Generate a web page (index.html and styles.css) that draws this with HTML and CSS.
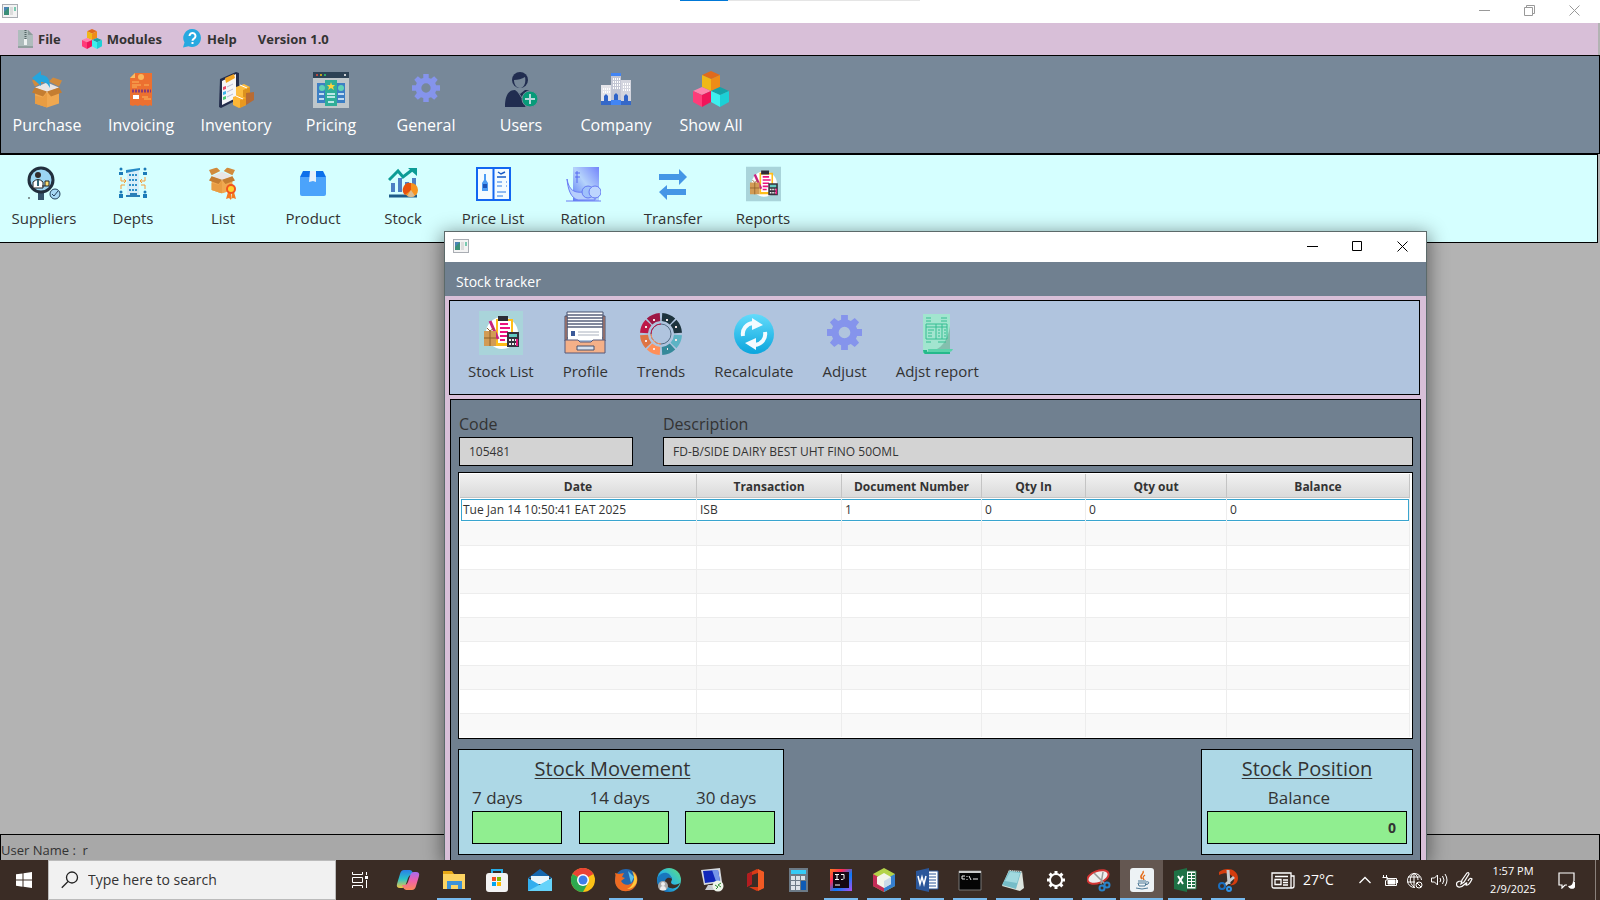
FILE: index.html
```html
<!DOCTYPE html>
<html lang="en">
<head>
<meta charset="utf-8">
<title>Stock tracker</title>
<link rel="stylesheet" href="styles.css">
</head>
<body>
<svg class="defs" aria-hidden="true">
  <defs>
    <linearGradient id="g-sky" x1="0" y1="0" x2="0" y2="1"><stop offset="0" stop-color="#63dbfb"/><stop offset="1" stop-color="#0aa5dd"/></linearGradient>
    <linearGradient id="g-violet" x1="1" y1="0" x2="0" y2="1"><stop offset="0" stop-color="#7384fb"/><stop offset=".5" stop-color="#b5d3fb"/><stop offset="1" stop-color="#5b7cf5"/></linearGradient>
    <linearGradient id="g-cop1" x1="0" y1="0" x2="0" y2="1"><stop offset="0" stop-color="#2a7fe8"/><stop offset=".5" stop-color="#29c3c9"/><stop offset="1" stop-color="#f5c542"/></linearGradient>
    <linearGradient id="g-cop2" x1="0" y1="0" x2="0" y2="1"><stop offset="0" stop-color="#a66bf0"/><stop offset=".5" stop-color="#f062a8"/><stop offset="1" stop-color="#fb8a5a"/></linearGradient>
    <linearGradient id="g-edge" x1="0" y1="1" x2="1" y2="0"><stop offset="0" stop-color="#0c59a4"/><stop offset=".5" stop-color="#2bb7e3"/><stop offset="1" stop-color="#5fe07a"/></linearGradient>
    <linearGradient id="g-ij" x1="0" y1="0" x2="1" y2="1"><stop offset="0" stop-color="#fc801d"/><stop offset=".3" stop-color="#fe2857"/><stop offset=".6" stop-color="#087cfa"/><stop offset="1" stop-color="#b14ff0"/></linearGradient>
  </defs>
  <symbol id="appwin" viewBox="0 0 16 14"><rect x=".5" y=".5" width="15" height="13" fill="#f3f3f3" stroke="#a9adb3"/><path d="M2 3h5v8H2z" fill="#3b8f78"/><path d="M2 3h5L2 8z" fill="#4a83b5"/><path d="M8 3h3v8H8z" fill="#dcdcdc"/><path d="M12 3h2v4h-2z" fill="#79c9b0"/></symbol>
  <symbol id="cubes" viewBox="0 0 36 36"><path d="M18 0l9 4-9 4-9-4z" fill="#e06a1c"/><path d="M9 4l9 4v12l-9-4z" fill="#f0b817"/><path d="M27 4l-9 4v12l9-4z" fill="#ee8c18"/><path d="M9 16l9 4-9 4-9-4z" fill="#ff84ad"/><path d="M0 20l9 4v12l-9-5z" fill="#ff3b79"/><path d="M18 20l-9 4v12l9-5z" fill="#f0145a"/><path d="M27 16l9 4-9 4-9-4z" fill="#14a3a8"/><path d="M18 20l9 4v12l-9-5z" fill="#3df0ee"/><path d="M36 20l-9 4v12l9-5z" fill="#1cd0d6"/></symbol>
  <symbol id="gear" viewBox="0 0 36 36"><path fill="#8594ec" fill-rule="evenodd" d="M14.500 0h7v5l3 1.200 4-3.200 4.500 4.500-3.200 4 1.200 3h5v7h-5l-1.200 3 3.200 4-4.500 4.500-4-3.200-3 1.200v5h-7v-5l-3-1.200-4 3.200L3 28.500l3.200-4-1.200-3H0v-7h5l1.200-3L3 7.500 7.500 3l4 3.200 3-1.200zM18 12a6 6 0 1 0 0 12 6 6 0 0 0 0-12z"/></symbol>
  <symbol id="report" viewBox="0 0 44 44"><path d="M0 0h44v44H0z" fill="#a9d4da"/><circle cx="23" cy="22" r="16" fill="#fff"/><path d="M17 8h17v27H17z" fill="#ffbe1b"/><path d="M19 10h13v22H19z" fill="#fff"/><path d="M19 5h10v5H19z" fill="#2c2c35"/><path d="M21 13h8M21 17h10M21 21h8M21 25h7M21 29h5" stroke="#ec1380" stroke-width="2"/><path d="M11 10l8 18" stroke="#c9237e" stroke-width="3"/><path d="M5 20h12v15H5z" fill="#d29b55"/><path d="M5 27h12M11 20v15" stroke="#8d5f2b"/><path d="M8 17l3 3 4-3" stroke="#8d5f2b" fill="none"/><path d="M28 21h12v15H28z" fill="#35323d"/><path d="M30 23h8v3h-8z" fill="#63c8c0"/><path d="M30 29h8M30 33h8" stroke="#eee" stroke-width="2" stroke-dasharray="2 1"/><path d="M37 28h2v7h-2z" fill="#e3167b"/></symbol>
  <symbol id="box" viewBox="0 0 30 30"><path d="M3 10l12 4 12-4v16l-12 4-12-4z" fill="#f0a850"/><path d="M3 10l12-5 12 5-12 5z" fill="#e9e5e4"/><path d="M3 9L0 3l9-3 4 4zM27 9l3-6-9-3-4 4z" fill="#d18b3c"/><path d="M3 10l12 4-4 5-11-4zM27 10l-12 4 4 5 11-4z" fill="#c47d31"/><path d="M3 18v8l12 4V15l-4 5z" fill="#e99d43"/></symbol>
</svg>

<header class="titlebar">
  <svg width="16" height="14" role="img" aria-label="Application"><use href="#appwin"/></svg>
  <div class="progress"></div>
  <div class="controls faded">
    <button aria-label="Minimize"><svg width="11" height="11"><path d="M0 5.500h11"/></svg></button>
    <button aria-label="Restore"><svg width="11" height="11"><path d="M.5 2.500h8v8h-8zM2.500 2.500v-2h8v8h-2"/></svg></button>
    <button aria-label="Close"><svg width="11" height="11"><path d="M.5.5l10 10M10.500.5l-10 10"/></svg></button>
  </div>
</header>

<nav class="menubar">
  <button><svg width="15" height="18" viewBox="0 0 15 18"><path d="M0 0h10l5 5v13H0z" fill="#aebcbc"/><path d="M10 0l5 5h-5z" fill="#8d9c9c"/><path d="M0 16h15v2H0z" fill="#909e9e"/><path d="M7.500 0v11" stroke="#566" stroke-width="2" stroke-dasharray="1 1"/><path d="M6 9h3v6H6z" fill="#eef2f2"/></svg>File</button>
  <button><svg width="20" height="20"><use href="#cubes"/></svg>Modules</button>
  <button><svg width="19" height="19" viewBox="0 0 19 19"><path d="M9.500 0a9 9 0 1 1-4 17.300L0 18.500l1.500-5A9 9 0 0 1 9.500 0z" fill="#26a9e0"/><path d="M6.500 7a3 3 0 1 1 4.500 2.600c-1 .6-1.500 1-1.500 2.200M9.500 13v2" fill="none" stroke="#fff" stroke-width="2"/></svg>Help</button>
  <button>Version 1.0</button>
</nav>

<nav class="modules">
  <button><svg width="32" height="38" viewBox="0 0 32 38"><svg x="1" y="6" width="30" height="31" preserveAspectRatio="none"><use href="#box"/></svg><path d="M1 7l9-7v4c7 0 9 5 9 13-2-4-4-6-9-6v4z" fill="#25a5dd"/></svg>Purchase</button>
  <button><svg width="32" height="38" viewBox="0 0 32 38"><path d="M5 7l5-5h17v33l-2-1-2 1-3-1-2 1-3-1-2 1-3-1-2 1-3-1z" fill="#ec7030"/><path d="M5 7l5-5v5z" fill="#f9bf66"/><circle cx="16" cy="6" r="3" fill="#fbb75c"/><path d="M7 11h7M7 14h9M7 16h5M19 14h5M19 28h7M17 26h6" stroke="#fbb75c"/><path d="M7 20h19" stroke="#863a78" stroke-width="3" stroke-dasharray="2 1"/><path d="M8 24h6v4H8z" fill="#fff"/></svg>Invoicing</button>
  <button><svg width="36" height="38" viewBox="0 0 36 38"><path d="M2 8L18 1l3 1v26L3 37l-2-1z" fill="#232c4b"/><path d="M4 10l14-7v24L4 34z" fill="#f5f5f8"/><path d="M7 7l9-4 1 4-9 5z" fill="#f5a623"/><path d="M5 16l3-1v3l-3 1z" fill="#e64c6c"/><path d="M5 21l3-1v3l-3 1z" fill="#3fb3ea"/><path d="M5 26l3-1v3l-3 1z" fill="#4ecb71"/><path d="M9 16l6-3M9 21l6-3M9 26l6-3" stroke="#b9bbd0"/><path d="M18 16l8-3 6 3v9l-7 4-7-4z" fill="#fdbd3f"/><path d="M25 19l7-3v9l-7 4z" fill="#dd921e"/><path d="M28 22l8-1v8l-8 5z" fill="#b86b33"/><path d="M15 26l6-2 7 3v7l-7 3-6-3z" fill="#fdb636"/><path d="M22 29l6-2v7l-6 3z" fill="#e9981e"/><path d="M22 14l7 3M18 25l7 3" stroke="#fff"/></svg>Inventory</button>
  <button><svg width="36" height="38" viewBox="0 0 36 38"><path d="M0 1h36v36H0z" fill="#bfc7cb"/><path d="M0 1h36v6H0z" fill="#2d4255"/><circle cx="4" cy="4" r="1" fill="#e74c3c"/><circle cx="8" cy="4" r="1" fill="#f1c40f"/><circle cx="12" cy="4" r="1" fill="#2ecc71"/><circle cx="32" cy="4" r="1" fill="#fff"/><path d="M4 12h28v20H4z" fill="#3c7fc4"/><path d="M12 9h12v26H12z" fill="#2fae98"/><circle cx="9" cy="17" r="3" fill="#5fd3b6"/><circle cx="28" cy="17" r="3" fill="#5fd3b6"/><path d="M18 11l1 3h3l-2 2 1 3-3-2-3 2 1-3-2-2h3z" fill="#ffd33d"/><path d="M6 23h5M6 28h5M14 23h8M14 26h8M25 23h6M25 28h6M15 31h6" stroke="#eafaff" stroke-width="1.500"/></svg>Pricing</button>
  <button><svg width="28" height="38" viewBox="0 0 28 38"><use href="#gear" y="3" width="28" height="28"/></svg>General</button>
  <button><svg width="34" height="38" viewBox="0 0 34 38"><circle cx="16" cy="9" r="8" fill="#212d50"/><path d="M10 9c4 0 8-1 11-3 1 4 0 11-5 11-4 0-6-4-6-8z" fill="#778899"/><path d="M1 36c0-11 3-17 10-17l5 4 5-4c4 0 7 2 8 5l-8 12z" fill="#212d50"/><path d="M14 21l4 6" stroke="#778899"/><circle cx="26" cy="28" r="8" fill="#079b79" stroke="#778899"/><path d="M26 23v10M21 28h10" stroke="#b8d7db" stroke-width="2"/></svg>Users</button>
  <button><svg width="30" height="38" viewBox="0 0 30 38"><path d="M0 14h10v20H0z" fill="#e5e5ea"/><path d="M20 9h10v25H20z" fill="#d3d5de"/><path d="M10 3h10v31H10z" fill="#c3c6d4"/><path d="M10 2h10v3H10z" fill="#4285f4"/><path d="M2 18h7M2 21h7M12 8h7M12 11h7M12 14h7M12 17h7M22 13h7M22 16h7M22 19h7" stroke="#fff" stroke-width="2" stroke-dasharray="1 1"/><path d="M0 30h30v4H0z" fill="#3568c8"/><path d="M3 30v-5l2-2 2 2v5zM23 30v-5l2-2 2 2v5zM13 30v-6l2-2 2 2v6z" fill="#2f64c9"/><path d="M10 29h10v5H10z" fill="#4285f4"/></svg>Company</button>
  <button><svg width="36" height="38" viewBox="0 0 36 38"><use href="#cubes" width="36" height="36"/></svg>Show All</button>
</nav>

<nav class="submodules">
  <button><svg width="34" height="36" viewBox="0 0 34 36"><path d="M11 26h6v8h-6z" fill="#35526a"/><circle cx="14" cy="14" r="12" fill="#9bd5f3" stroke="#222f3d" stroke-width="3"/><circle cx="11" cy="9" r="3" fill="#332b2b"/><path d="M6 21v-5q5-5 10 0v6H6z" fill="#fff" stroke="#222"/><path d="M11 14v6" stroke="#367" stroke-width="2"/><path d="M15 20h7v-5h-4v5" fill="#fddf73" stroke="#222"/><circle cx="28" cy="28" r="5" fill="#a7d9f5" stroke="#24415b"/><path d="M25 28l2 2 4-5" fill="none" stroke="#24415b"/><path d="M2 31l1 1-1 1-1-1z" fill="#333"/></svg>Suppliers</button>
  <button><svg width="30" height="36" viewBox="0 0 30 36"><path d="M9 6l12-3v27H9z" fill="#d6edf8"/><path d="M8 4l14-2v2L8 7z" fill="#258ac6"/><path d="M11 9h9M11 14h9M11 19h9M11 24h9" stroke="#2f8fc9" stroke-width="2" stroke-dasharray="2 1"/><path d="M8 30h14M12 28h7" stroke="#2c7fb8" stroke-width="2"/><path d="M1 9h4v-3H1zM25 9h4v-3h-4zM1 32h4v-4H1zM25 32h4v-4h-4z" fill="#1b7bb8"/><circle cx="3" cy="3" r="1.500" fill="#1b7bb8"/><circle cx="27" cy="3" r="1.500" fill="#1b7bb8"/><circle cx="3" cy="26" r="1.500" fill="#1b7bb8"/><circle cx="27" cy="26" r="1.500" fill="#1b7bb8"/><path d="M3 11v4h4M27 11v4h-4M3 23v-4h4M27 23v-4h-4M6 13l2 2-2 2M24 13l-2 2 2 2" fill="none" stroke="#f39b37"/></svg>Depts</button>
  <button><svg width="30" height="36" viewBox="0 0 30 36"><svg x="1" y="1" width="26" height="27" viewBox="0 0 30 30"><use href="#box" width="30" height="30"/></svg><path d="M20 26l-2 7 3-1 2 2 1-7zM26 26l2 7-3-1-2 1v-6z" fill="#f47b20"/><circle cx="23" cy="23" r="5" fill="#f0541e"/><circle cx="23" cy="23" r="3" fill="#ffd22e"/></svg>List</button>
  <button><svg width="26" height="36" viewBox="0 0 26 36"><path d="M3 5h20l3 6H0z" fill="#0b6fea"/><path d="M0 11h26v17q0 2-2 2H2q-2 0-2-2z" fill="#4ba3fb"/><path d="M10 5h6v11l-3-1-4 1z" fill="#e6f0fa"/></svg>Product</button>
  <button><svg width="30" height="36" viewBox="0 0 30 36"><path d="M1 14l9-9 5 6 9-7" fill="none" stroke="#0c9c96" stroke-width="3"/><path d="M20 2h9v8z" fill="#0c9c96"/><path d="M3 17h4v9H3zM10 12h4v14h-4zM17 16h4v10h-4zM24 12h4v14h-4z" fill="#4e7fc4"/><path d="M1 30h28" stroke="#1d5b88" stroke-width="3"/><circle cx="23" cy="24" r="7" fill="#f7941e"/><path d="M23 24l-6 5a7 7 0 0 1 6-12z" fill="#e8530e"/><path d="M23 24l4 6q-4 2-8 0z" fill="#d9bc92"/></svg>Stock</button>
  <button><svg width="35" height="36" viewBox="0 0 35 36"><path d="M1 2h33v32H1zM17.500 2v32" fill="#f3fbff" stroke="#1266f1" stroke-width="2"/><path d="M8 8h2v6l2 3v8H6v-8l2-3z" fill="#4b9bf4"/><path d="M7 18h4v4H7z" fill="#1d55b8"/><path d="M22 6l3 2 4-2M21 11h9" stroke="#1759c5" stroke-width="1.500" fill="none"/><path d="M21 16h5M30 16h1M21 20h5M30 20h1M21 26h9M21 30h6" stroke="#2b78e4"/></svg>Price List</button>
  <button><svg width="35" height="36" viewBox="0 0 35 36"><path d="M7 1h26v34H7z" fill="url(#g-violet)"/><path d="M11 5v12M9 7h5M9 11h5" stroke="#556bf1"/><path d="M1 13c2 12 8 14 16 13l12-2v10H12C5 32 2 24 1 13z" fill="#b6cffc" stroke="#6a7df5"/><circle cx="22" cy="26" r="6" fill="#9fc1fb" stroke="#6579f2"/><circle cx="29" cy="26" r="6" fill="#bdd5fe" stroke="#6579f2"/><path d="M0 35h35" stroke="#6a7df5"/></svg>Ration</button>
  <button><svg width="30" height="36" viewBox="0 0 30 36"><path d="M1 8h20V3l8 8-8 8v-5H1zM28 23H9v-4l-8 7 8 8v-5h19z" fill="#4596e6"/></svg>Transfer</button>
  <button><svg width="35" height="36" viewBox="0 0 44 44"><use href="#report" width="44" height="44"/></svg>Reports</button>
</nav>

<main class="desktop"></main>
<footer class="status">User Name :&nbsp; r</footer>

<section class="tracker" aria-label="Stock tracker">
  <div class="tracker-title">
    <svg width="16" height="14" aria-hidden="true"><use href="#appwin"/></svg>
    <div class="controls">
      <button aria-label="Minimize"><svg width="11" height="11"><path d="M0 5.500h11"/></svg></button>
      <button aria-label="Maximize"><svg width="11" height="11"><path d="M.5.5h9v9h-9z"/></svg></button>
      <button aria-label="Close"><svg width="11" height="11"><path d="M.5.5l10 10M10.500.5l-10 10"/></svg></button>
    </div>
  </div>
  <h1 class="tracker-head">Stock tracker</h1>
  <nav class="actions">
    <button><svg width="44" height="46" viewBox="0 0 44 46"><use href="#report" width="44" height="44"/></svg>Stock List</button>
    <button><svg width="42" height="46" viewBox="0 0 42 46"><path d="M3 1h36v26H3z" fill="#fff" stroke="#46506c"/><path d="M3 4h36M3 7h36M3 10h36M3 13h36M3 16h36" stroke="#59627c" stroke-width="1.500"/><path d="M1 5h2v25H1zM39 5h2v25h-2z" fill="#d98b6a" stroke="#46506c"/><path d="M4 18h34v11H4z" fill="#fff"/><path d="M7 20h4v5H7z" fill="#3c5a99"/><path d="M14 21h21M14 24h21" stroke="#a9b0bd"/><path d="M1 29h13l2 2h11l2-2h12v13H1z" fill="#f4b088" stroke="#54587a"/><path d="M13 35h17v4H13z" fill="#d6e0ee" stroke="#46506c"/></svg>Profile</button>
    <button><svg width="44" height="46" viewBox="0 0 44 46"><g transform="translate(22 23)" fill="none" stroke-width="8"><path d="M1-17A17 17 0 0 1 11.500-12.500M12.500-11.500A17 17 0 0 1 17-1" stroke="#1d333d"/><path d="M17 1A17 17 0 0 1 12.500 11.500" stroke="#5db3c4"/><path d="M11.500 12.500A17 17 0 0 1 1 17" stroke="#35899a"/><path d="M-1 17A17 17 0 0 1-11.500 12.500" stroke="#ff8f59"/><path d="M-12.500 11.500A17 17 0 0 1-17 1" stroke="#de7444"/><path d="M-17-1A17 17 0 0 1-12.500-11.500" stroke="#bd1748"/><path d="M-11.500-12.500A17 17 0 0 1-1-17" stroke="#9e1845"/></g><circle cx="22" cy="23" r="10" fill="none" stroke="#526b83"/><path d="M12 23a10 10 0 0 1 10-10" stroke="#bd1748" fill="none"/><path d="M12 23a10 10 0 0 0 10 10" stroke="#ff8f59" fill="none"/><path d="M27 9h2M36 16h2M36 29h2M28 38h1M14 38h2M6 30h2M6 16h2M14 9h2" stroke="#f5e6e6" stroke-width="2"/></svg>Trends</button>
    <button><svg width="40" height="46" viewBox="0 0 40 46"><circle cx="20" cy="23" r="20" fill="url(#g-sky)"/><path d="M9 25a11 11 0 0 1 10-13M31 21a11 11 0 0 1-10 13" fill="none" stroke="#f4fbff" stroke-width="4"/><path d="M18 7l11 7-11 5zM22 39l-11-7 11-5z" fill="#f4fbff"/></svg>Recalculate</button>
    <button><svg width="35" height="46" viewBox="0 0 35 46"><use href="#gear" y="4" width="35" height="35"/></svg>Adjust</button>
    <button><svg width="36" height="46" viewBox="0 0 36 46"><path d="M4 3h27v40H4z" fill="#a2e5cf"/><path d="M31 15v24H16q12-5 15-24z" fill="#84bfae"/><path d="M4 39h4v2h23v2H6q-2-1-2-4z" fill="#24b98b"/><path d="M9 38h25q-1 3-4 3H8q2-1 1-3z" fill="#5bd3aa"/><path d="M7 7h5M7 10h5M22 7h6M22 10h6M7 31h5M19 31h8" stroke="#34be92"/><path d="M7 13h21v15H7zM7 16h21M17 13v15M23 13v15" fill="none" stroke="#34be92"/><path d="M9 19h6M9 22h4M9 25h4M19 19h2M19 22h2M19 25h2M25 19h2M25 22h2M25 25h2" stroke="#34be92"/></svg>Adjst report</button>
  </nav>
  <div class="panel">
    <div class="fields">
      <div class="field code"><label for="code">Code</label><input id="code" value="105481"></div>
      <div class="field desc"><label for="desc">Description</label><input id="desc" value="FD-B/SIDE DAIRY BEST UHT FINO 50OML"></div>
    </div>
    <div class="grid">
      <table>
        <colgroup><col class="c-date"><col class="c-tran"><col class="c-doc"><col class="c-in"><col class="c-out"><col></colgroup>
        <thead><tr><th>Date</th><th>Transaction</th><th>Document Number</th><th>Qty In</th><th>Qty out</th><th>Balance</th></tr></thead>
        <tbody>
          <tr class="selected"><td><span>Tue Jan 14 10:50:41 EAT 2025</span></td><td><span>ISB</span></td><td><span>1</span></td><td><span>0</span></td><td><span>0</span></td><td><span>0</span></td></tr>
          <tr><td></td><td></td><td></td><td></td><td></td><td></td></tr>
          <tr><td></td><td></td><td></td><td></td><td></td><td></td></tr>
          <tr><td></td><td></td><td></td><td></td><td></td><td></td></tr>
          <tr><td></td><td></td><td></td><td></td><td></td><td></td></tr>
          <tr><td></td><td></td><td></td><td></td><td></td><td></td></tr>
          <tr><td></td><td></td><td></td><td></td><td></td><td></td></tr>
          <tr><td></td><td></td><td></td><td></td><td></td><td></td></tr>
          <tr><td></td><td></td><td></td><td></td><td></td><td></td></tr>
          <tr><td></td><td></td><td></td><td></td><td></td><td></td></tr>
        </tbody>
      </table>
    </div>
    <div class="summary">
      <section class="card movement">
        <h2>Stock Movement</h2>
        <div class="periods">
          <div class="period"><label for="d7">7 days</label><input id="d7"></div>
          <div class="period inset"><label for="d14">14 days</label><input id="d14"></div>
          <div class="period inset"><label for="d30">30 days</label><input id="d30"></div>
        </div>
      </section>
      <section class="card position">
        <h2>Stock Position</h2>
        <div class="period total"><label for="bal">Balance</label><input id="bal" value="0"></div>
      </section>
    </div>
  </div>
</section>

<footer class="taskbar">
  <button class="start" aria-label="Start"><svg width="16" height="16"><path d="M0 2.300L6.500 1.400V7.500H0zM7.500 1.200L16 0v7.500H7.500zM0 8.500h6.500v6.200L0 13.700zM7.500 8.500H16V16l-8.500-1.200z" fill="#fff"/></svg></button>
  <div class="search"><svg width="18" height="18" aria-hidden="true"><circle cx="11" cy="6.500" r="5.500" fill="none" stroke="#222" stroke-width="1.300"/><path d="M7 10.500L.8 16.700" stroke="#222" stroke-width="1.300"/></svg><input aria-label="Search" placeholder="Type here to search"></div>
  <button class="wide" aria-label="Task View"><svg width="17" height="16" fill="none" stroke="#fff"><path d="M.5 0v2.500h10V0M.5 5.500h10v5H.5zM.5 16v-2.500h10V16M14.500 0v3M14.500 8v8"/><path d="M13 4h3v3h-3z" fill="#fff" stroke="none"/></svg></button>
  <button class="wide" aria-label="Copilot"><svg width="24" height="24" viewBox="0 0 24 24"><path d="M8 2h6q2 0 3 3l1 2h-3q-2 0-3 3l-2 6q-1 4-4 4H4q-4 0-3-4L4 6q1-4 4-4z" fill="url(#g-cop1)"/><path d="M16 22h-6q-2 0-3-3l-1-2h3q2 0 3-3l2-6q1-4 4-4h2q4 0 3 4l-3 10q-1 4-4 4z" fill="url(#g-cop2)"/></svg></button>
  <button class="running" aria-label="File Explorer"><svg width="24" height="24" viewBox="0 0 24 24"><path d="M1 3h9l2 3h11v15H1z" fill="#e6a817"/><path d="M1 6h22v15H1z" fill="#fcd462"/><path d="M5 13h15v8h-4v-4H9v4H5z" fill="#3c92d8"/></svg></button>
  <button aria-label="Store"><svg width="24" height="24" viewBox="0 0 24 24"><path d="M7 6V2h10v4" fill="none" stroke="#27aee8" stroke-width="2"/><rect y="5" x="1" width="22" height="19" rx="3" fill="#f3f3f3"/><path d="M7 9h4v4H7z" fill="#f25022"/><path d="M12 9h4v4h-4z" fill="#7fba00"/><path d="M7 14h4v4H7z" fill="#00a4ef"/><path d="M12 14h4v4h-4z" fill="#ffb900"/></svg></button>
  <button aria-label="Mail"><svg width="24" height="24" viewBox="0 0 24 24"><path d="M0 10L12 1l12 9z" fill="#1567ae"/><path d="M3 8h18v8H3z" fill="#eaf6fc"/><path d="M0 10l12 7 12-7v13H0z" fill="#32aeee"/><path d="M0 23L24 10v13z" fill="#65d3fa"/></svg></button>
  <button aria-label="Chrome"><svg width="24" height="24" viewBox="0 0 24 24"><circle cx="12" cy="12" r="12" fill="#fbc116"/><path d="M12 12L1.600 6A12 12 0 0 1 22.400 6z" fill="#ea4335"/><path d="M1.600 6A12 12 0 0 0 12 24l5-9z" fill="#2da94f"/><circle cx="12" cy="12" r="6" fill="#fff"/><circle cx="12" cy="12" r="4.500" fill="#3e7ee8"/></svg></button>
  <button class="running" aria-label="Firefox"><svg width="24" height="24" viewBox="0 0 24 24"><circle cx="12" cy="12" r="11" fill="#2366ad"/><path d="M14 3l6 6-3 6z" fill="#5bc1ed"/><path d="M1 5l4 1 5-1-2 4 3 1-4 3c2 4 7 5 11 2 4-4 3-9 1-12 4 3 5 7 4 11-2 12-21 13-22-1 0-3 1-5 0-8z" fill="#ed6b22"/><path d="M18 3c5 4 6 9 4 13-2 3-5 5-9 5 7-3 9-11 5-18z" fill="#ffc93c"/></svg></button>
  <button aria-label="Edge"><svg width="24" height="24" viewBox="0 0 24 24"><circle cx="12" cy="12" r="12" fill="url(#g-edge)"/><path d="M8 11c1-3 7-3 7 0 0 2-2 3 0 5 2 1 5 1 8-1-2 5-7 7-12 4-3-2-4-5-3-8z" fill="#3b2d26"/><path d="M1 9c4-6 12-6 14 2-5-4-9 2-7 8 1 2 3 4 5 5C5 25-2 17 1 9z" fill="#1976bd"/><circle cx="6" cy="18" r="5" fill="#aaa"/><circle cx="6" cy="16" r="2" fill="#eee"/><path d="M3 22q0-4 3-4t3 4z" fill="#eee"/></svg></button>
  <button aria-label="Remote Desktop"><svg width="24" height="24" viewBox="0 0 24 24"><path d="M1 2l19-2 2 14-18 3z" fill="#d5d9df"/><path d="M3 3l15-1 2 11-15 2z" fill="#1027ba"/><path d="M12 2l6 0 2 11-4 .5z" fill="#7596e8"/><path d="M8 17h6l3 5H5z" fill="#c9ccd0"/><circle cx="18" cy="18" r="5.500" fill="#eef4ea"/><path d="M15 17l3 2-2 2M21 15l-3 2 3 2" stroke="#2e8b36" fill="none"/></svg></button>
  <button aria-label="Office"><svg width="24" height="24" viewBox="0 0 24 24"><path d="M4 6L14 1l7 3v16l-7 3-8-4 9 0V5L9 7v9l-5 3z" fill="#d83b16"/><path d="M4 6l5-2v12l-5 3z" fill="#b21c20"/><path d="M15 1l6 3v16l-6 3z" fill="#f15a24"/></svg></button>
  <button aria-label="Calculator"><svg width="24" height="24" viewBox="0 0 24 24"><path d="M3 0h19v24H3z" fill="#6c7a86"/><path d="M5 2h15v4H5z" fill="#35cbf6"/><path d="M5 8h4v4H5zM10 8h4v4h-4zM15 8h4v4h-4zM5 13h4v4H5zM10 13h4v4h-4zM5 18h4v4H5zM10 18h4v4h-4z" fill="#dce3e8"/><path d="M15 13h5v9h-5z" fill="#0e5bb5"/></svg></button>
  <button class="running" aria-label="IntelliJ"><svg width="24" height="24" viewBox="0 0 24 24"><path d="M1 1h22v22H1z" fill="url(#g-ij)"/><path d="M4 4h16v16H4z" fill="#150814"/><path d="M6 6.500h4M8 6.500v5M6 11.500h4M12 6.500h3v4q0 1-3 1M6 17h5" stroke="#fff" fill="none"/></svg></button>
  <button class="running" aria-label="NetBeans"><svg width="24" height="24" viewBox="0 0 24 24"><path d="M12 0l11 6v12l-11 6-11-6V6z" fill="#b4d34a"/><path d="M1 6l11 6v12l-11-6z" fill="#c42d57"/><path d="M23 6l-11 6v12l11-6z" fill="#357fd0"/><path d="M12 5l7 4v7l-7 4-7-4V9z" fill="#f3f5ea"/><path d="M12 13v7l7-4V9z" fill="#cadbe9"/></svg></button>
  <button class="running" aria-label="Word"><svg width="24" height="24" viewBox="0 0 24 24"><path d="M12 3h11v18H12z" fill="#fff" stroke="#2b579a"/><path d="M14 6h7M14 9h7M14 12h7M14 15h7M14 18h7" stroke="#2b579a"/><path d="M1 3l13-3v24L1 21z" fill="#2b579a"/><path d="M3 8l2 8 2-7 2 7 2-8" fill="none" stroke="#fff" stroke-width="1.500"/></svg></button>
  <button class="running" aria-label="Command Prompt"><svg width="24" height="24" viewBox="0 0 24 24"><path d="M1 3h22v19H1z" fill="#050505" stroke="#777"/><path d="M1 3h22v2H1z" fill="#ccc"/><path d="M7 8H4v3h3M9 8v1M9 11v1M11 8l2 4M15 11h5" stroke="#eee" fill="none"/></svg></button>
  <button class="running" aria-label="Notepad"><svg width="24" height="24" viewBox="0 0 24 24"><path d="M8 2l13 1 2 17-4 3-18-5z" fill="#dce5df"/><path d="M8 3l12 1-5 17-14-4z" fill="#76bdc8"/><path d="M9 4l10 1-3 10-12-2z" fill="#a1d9df"/><path d="M8 2l13 2" stroke="#555" stroke-dasharray="1 1"/></svg></button>
  <button class="running" aria-label="Settings"><svg width="24" height="24" viewBox="0 0 24 24"><circle cx="12" cy="12" r="6" fill="none" stroke="#fff" stroke-width="2"/><g stroke="#fff" stroke-width="3"><path d="M12 3v3M12 18v3M3 12h3M18 12h3M5.600 5.600l2 2M16.400 16.400l2 2M5.600 18.400l2-2M16.400 7.600l2-2"/></g></svg></button>
  <button class="running" aria-label="Snip"><svg width="24" height="24" viewBox="0 0 24 24"><ellipse cx="11" cy="9" rx="11" ry="6" transform="rotate(-20 11 9)" fill="#eee" stroke="#d33433" stroke-width="2"/><path d="M7 5l11 11M16 4l-2 12" stroke="#999" stroke-width="1.500"/><circle cx="20" cy="17" r="2.500" fill="none" stroke="#2883c9" stroke-width="2"/><circle cx="15" cy="20" r="2.500" fill="none" stroke="#2883c9" stroke-width="2"/></svg></button>
  <button class="running active" aria-label="Java"><svg width="24" height="24" viewBox="0 0 24 24"><rect width="24" height="24" rx="3" fill="#edf2f5"/><path d="M13 3c2 3-5 4-1 8M15 7c-3 2-2 3-1 5" fill="none" stroke="#e56e1e" stroke-width="1.500"/><path d="M8 13h8M8 15h8l-1 3H9zM16 14q4-1 2 2l-3 1M6 20q6 2 12 0" fill="none" stroke="#4d7896"/></svg></button>
  <button class="running" aria-label="Excel"><svg width="24" height="24" viewBox="0 0 24 24"><path d="M12 3h11v18H12z" fill="#fff" stroke="#217346"/><path d="M15 6h7M15 9h7M15 12h7M15 15h7M15 18h7" stroke="#217346" stroke-width="2" stroke-dasharray="3 1"/><path d="M1 3l13-3v24L1 21z" fill="#1e7145"/><path d="M5 8l5 8M10 8l-5 8" stroke="#fff" stroke-width="2"/></svg></button>
  <button class="running" aria-label="Snipping Tool"><svg width="24" height="24" viewBox="0 0 24 24"><path d="M3 4c7-6 19-3 19 6 0 5-4 8-8 7 4-2 5-5 3-8C14 5 9 4 3 7z" fill="#d43c0e"/><path d="M12 2l1 14M18 9l-9 8" stroke="#c6c9cc" stroke-width="3"/><circle cx="6" cy="18" r="3" fill="none" stroke="#1a6fc0" stroke-width="2"/><circle cx="13" cy="21" r="2" fill="none" stroke="#2f92e6" stroke-width="2"/></svg></button>
  <div class="tray">
    <button class="weather"><svg width="24" height="17" fill="none" stroke="#fff" stroke-width="1.300"><path d="M1 1h19v15H3q-2 0-2-2zM20 4h3v10q0 2-2 2h-2M4 4.500h13M4 7.500h6v5H4zM12 8h5M12 10.500h5M12 13h5"/></svg>27°C</button>
    <button aria-label="Hidden icons"><svg width="12" height="8" fill="none" stroke="#fff" stroke-width="1.300"><path d="M.5 7L6 1.500 11.500 7"/></svg></button>
    <button aria-label="Battery"><svg width="16" height="13" fill="none" stroke="#fff"><path d="M4.500 4.500h10v7h-9M15.500 6v3M1.500 1v2M4.500 1v2M.5 3.500h5v2l-2 1v5h3"/><path d="M6 6h7v4H6z" fill="#fff"/></svg></button>
    <button aria-label="Network"><svg width="17" height="17" fill="none" stroke="#fff"><path d="M9 15.500A7 7 0 1 1 15.500 8M8 1c-5 4-5 10 0 14M8 1c3 2 4 5 4 7M8 1v14M2 5h12M1 10h8"/><circle cx="13" cy="13" r="3"/><path d="M11 11l4 4"/></svg></button>
    <button aria-label="Volume"><svg width="17" height="14" fill="none" stroke="#fff"><path d="M.5 5v4h3l3 3V2l-3 3zM9 5q1.500 2 0 4M11.500 3q3 4 0 8M14 1q4 6 0 12"/></svg></button>
    <button aria-label="Pen"><svg width="17" height="17" fill="none" stroke="#fff" stroke-width="1.200"><path d="M5 12l1-4 5-7q2-1 2 1L8 10zM6 9q-7 0-5 5 3 3 8-2 3-3 1 1 3 1 6-6-2-2-4 2"/></svg></button>
    <button class="clock"><span>1:57 PM</span><span>2/9/2025</span></button>
    <button aria-label="Notifications"><svg width="17" height="17" fill="none" stroke="#fff" stroke-width="1.200"><path d="M9 13H7l-3 3v-3H1V1h15v8"/><path d="M15 9a4 4 0 1 1-5 5q5 0 5-5z" fill="#fff" stroke="none"/></svg></button>
  </div>
</footer>
</body>
</html>
```

FILE: styles.css
```css
* { box-sizing: border-box; }
body {
  margin: 0;
  height: 100vh;
  display: flex;
  flex-direction: column;
  position: relative;
  overflow: hidden;
  background: #b3b3b3;
  color: #333;
  font: 13px/20px "Open Sans", "Noto Sans", sans-serif;
}
button {
  border: 0;
  padding: 0;
  background: none;
  color: inherit;
  font: inherit;
}
svg { flex: none; }
.defs { position: absolute; width: 0; height: 0; }

/* main window chrome */
.titlebar {
  display: flex;
  align-items: center;
  justify-content: space-between;
  height: 23px;
  padding: 0 3px 2px 2px;
  background: #fff;
  position: relative;
}
.progress {
  position: absolute;
  top: 0;
  left: 680px;
  width: 240px;
  height: 1px;
  background: linear-gradient(to right, #0078d7 20%, #e5e5e5 20%);
}
.controls { display: flex; }
.controls button { display: grid; place-items: center; width: 45px; height: 20px; }
.controls svg { fill: none; stroke: #000; }
.controls.faded svg { stroke: #999; }

.menubar {
  display: flex;
  align-items: center;
  gap: 21px;
  height: 32px;
  margin-right: 2px;
  padding: 0 18px 1px;
  background: #d8bfd8;
  font-weight: 700;
}
.menubar button { display: flex; align-items: center; gap: 5px; }

/* toolbars */
.modules, .submodules { display: flex; align-items: flex-start; }
.modules button, .submodules button, .actions button {
  display: flex;
  flex-direction: column;
  align-items: center;
}
.modules {
  height: 99px;
  padding: 15px 0 0;
  border: 1px solid #000;
  background: #778899;
  color: #fff;
  font-size: 16px;
  line-height: 24px;
}
.modules button { width: 94px; gap: 4px; }
.modules button + button { margin-left: 1px; }
.modules button:first-child { width: 92px; }
.submodules {
  height: 89px;
  margin-right: 2px;
  padding-top: 11px;
  border: 1px solid #000;
  border-left: 0;
  background: #d5ffff;
  font-size: 15px;
  line-height: 22px;
}
.submodules button { width: 90px; gap: 5px; }
.submodules button:first-child { width: 88px; }

.desktop { flex: 1; }
.status {
  height: 26px;
  padding-top: 5px;
  border: 1px solid #000;
  border-bottom: 0;
  background: #a8a8a8;
}

/* floating stock tracker window */
.tracker {
  position: absolute;
  top: 231px;
  left: 444px;
  right: 173px;
  bottom: 40px;
  display: flex;
  flex-direction: column;
  overflow: hidden;
  border: 1px solid #5c6a6a;
  border-bottom: 0;
  background: #d8bfd8;
  box-shadow: 0 4px 18px 2px rgba(0, 0, 0, .45);
}
.tracker-title {
  flex: none;
  display: flex;
  align-items: center;
  justify-content: space-between;
  height: 30px;
  padding: 0 1px 2px 8px;
  background: #fff;
}
.tracker-head {
  flex: none;
  margin: 0;
  padding: 9px 11px 0;
  height: 34px;
  background: #708090;
  color: #fff;
  font-size: 14px;
  font-weight: 400;
  line-height: 22px;
}
.actions {
  flex: none;
  display: flex;
  align-items: flex-start;
  gap: 29px;
  height: 95px;
  margin: 4px 6px 4px 4px;
  padding: 10px 18px 0;
  border: 1px solid #000;
  background: #b0c4de;
  font-size: 15px;
  line-height: 22px;
}
.actions button { gap: 3px; }

.panel {
  flex: 1;
  display: flex;
  flex-direction: column;
  margin: 0 5px;
  padding: 12px 7px 0;
  border: 1px solid #000;
  border-bottom: 0;
  background: #708090;
}
.fields { display: flex; gap: 30px; padding-left: 1px; }
.field { display: flex; flex-direction: column; }
.field label { font-size: 16px; line-height: 25px; }
.code { width: 174px; }
.desc { flex: 1; }
input { min-width: 0; border: 1px solid #000; border-radius: 0; color: #333; outline: 0; font: inherit; }
.field input { height: 29px; padding: 0 9px; background: #d3d3d3; font-size: 12px; }

.grid {
  margin-top: 6px;
  padding: 1px 2px 1px 1px;
  border: 1px solid #000;
  background: #fff;
}
table { width: 100%; table-layout: fixed; border-collapse: separate; border-spacing: 0; font-size: 12px; }
.c-date { width: 237px; }
.c-tran { width: 145px; }
.c-doc { width: 140px; }
.c-in { width: 104px; }
.c-out { width: 141px; }
th {
  height: 24px;
  padding: 2px 0 0;
  border-right: 1px solid #c4c4c4;
  border-bottom: 1px solid #c4c4c4;
  background: linear-gradient(#f1f1f1, #dadada);
  line-height: 20px;
}
td { height: 24px; padding: 0; border-right: 1px solid #ededed; border-bottom: 1px solid #ededed; line-height: 20px; }
tbody tr:nth-child(even) { background: #f9f9f9; }
.selected td { border-bottom: 0; padding: 1px 0; }
.selected span { display: block; height: 22px; padding-left: 3px; border: 1px solid #39a5cf; border-width: 1px 0; }
.selected td:first-child span { margin-left: 1px; padding-left: 1px; border-left-width: 1px; }
.selected td:last-child span { border-right-width: 1px; }
tbody tr:last-child td { height: 23px; border-bottom: 0; }

.summary { display: flex; justify-content: space-between; margin-top: 10px; }
.card {
  display: flex;
  flex-direction: column;
  height: 106px;
  border: 1px solid #000;
  background: #add8e6;
}
.card h2 { margin: 4px 0 0; text-align: center; font-size: 20px; font-weight: 400; line-height: 30px; text-decoration: underline; text-decoration-thickness: 1px; text-underline-offset: 2px; }
.movement { width: 326px; padding: 0 8px 0 13px; }
.movement h2 { padding-right: 22px; }
.position { width: 212px; padding: 0 5px; }
.periods { display: flex; justify-content: space-between; }
.period { display: flex; flex-direction: column; width: 90px; font-size: 17px; line-height: 27px; }
.period input { height: 33px; background: #90ee90; }
.period.inset label { padding-left: 11px; }
.period.total { width: auto; text-align: center; }
.period.total label { padding-right: 16px; }
.period.total input { padding-right: 10px; text-align: right; font-size: 14px; font-weight: 700; }

/* operating system taskbar */
.taskbar {
  position: relative;
  z-index: 2;
  flex: none;
  display: flex;
  height: 40px;
  background: #3a2c25;
  color: #fff;
}
.taskbar button { display: grid; place-items: center; width: 43px; height: 40px; }
.taskbar .start { width: 48px; }
.taskbar .wide { width: 48px; }
.search { display: flex; align-items: center; gap: 9px; width: 288px; padding-left: 12px; border: 1px solid #bbb; background: #f1f1f1; }
.search input { flex: 1; border: 0; padding: 0; background: none; font-size: 14px; }
.search input::placeholder { color: #333; opacity: 1; }
.taskbar .running { background: linear-gradient(#76b9ed, #76b9ed) center bottom / 34px 2px no-repeat; }
.taskbar .active { background: linear-gradient(#76b9ed, #76b9ed) center bottom / 100% 2px no-repeat, #645751; }
.tray { display: flex; margin-left: auto; margin-right: 4px; padding-right: 12px; border-right: 1px solid #8a817c; }
.taskbar .tray button { width: 25px; }
.taskbar .tray .weather { display: flex; align-items: center; gap: 8px; width: 81px; font-size: 14px; }
.taskbar .tray .clock { display: flex; flex-direction: column; justify-content: center; width: 72px; font-size: 11px; line-height: 18px; }
.taskbar .tray button:last-child { width: 34px; }
```
